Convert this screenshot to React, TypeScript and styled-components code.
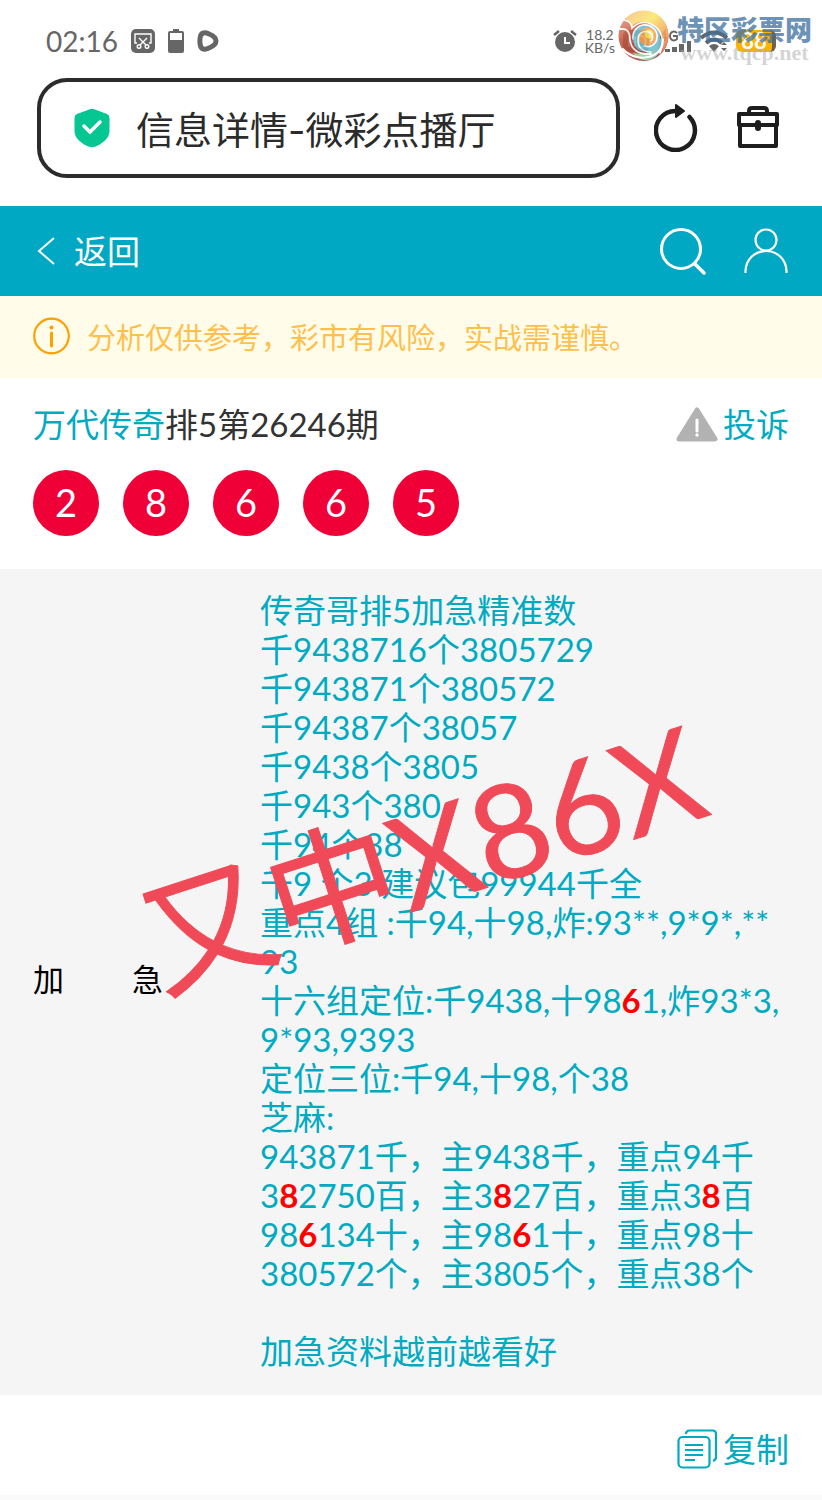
import React from 'react'
import styled, { createGlobalStyle } from 'styled-components'

const GlobalStyle = createGlobalStyle`
  * {
    box-sizing: border-box;
  }
  body {
    margin: 0;
    background: #fafafa;
    font-family: Lato, "Noto Sans CJK SC", sans-serif;
  }
  svg {
    display: block;
    flex: none;
  }
  button {
    padding: 0;
    border: 0;
    background: none;
    color: inherit;
    font: inherit;
  }
`

const Page = styled.div`
  position: relative;
  overflow: hidden;
  background: #fff;
`

const StatusBar = styled.div`
  display: flex;
  align-items: center;
  justify-content: space-between;
  height: 78px;
  padding: 4px 46px 0;
  color: #666;
`

const StatusGroup = styled.div<{ $gap: number }>`
  display: flex;
  align-items: center;
  gap: ${props => props.$gap}px;
`

const Clock = styled.span`
  font-size: 28px;
  line-height: 32px;
`

const Speed = styled.span`
  font-size: 14px;
  line-height: 13px;
  text-align: center;
`

const BatteryLevel = styled.span`
  width: 40px;
  height: 22px;
  border-right: 4px solid #6b6450;
  border-radius: 6px;
  background: #fdb200;
  color: #fff;
  font: 700 22px/22px Lato, sans-serif;
  text-align: center;
`

const Watermark = styled.div`
  position: absolute;
  top: 10px;
  right: 10px;
  display: flex;
  align-items: center;
  gap: 8px;
`

const WatermarkName = styled.div`
  margin-top: 4px;
  color: rgba(60, 112, 158, 0.75);
  font: 900 27px/30px "Noto Sans CJK SC", sans-serif;
`

const WatermarkSite = styled.div`
  color: rgba(170, 170, 170, 0.5);
  font: 700 22px/18px "Liberation Serif", serif;
  text-align: center;
`

const BrowserBar = styled.div`
  display: flex;
  align-items: center;
  gap: 34px;
  padding: 0 42px 28px 37px;
  color: #1e1e1e;
`

const AddressBox = styled.label`
  display: flex;
  flex: 1;
  align-items: center;
  gap: 26px;
  min-width: 0;
  height: 100px;
  padding: 0 33px;
  border: 4px solid #2b2b2b;
  border-radius: 30px;
`

const AddressInput = styled.input`
  flex: 1;
  min-width: 0;
  padding: 4px 0 0;
  border: 0;
  outline: 0;
  background: none;
  color: #2b2b2b;
  font: 38px/50px Inter, "Noto Sans CJK SC", sans-serif;
`

const BrowserTools = styled.div`
  display: flex;
  gap: 38px;
`

const Header = styled.header`
  display: flex;
  align-items: center;
  justify-content: space-between;
  height: 90px;
  padding: 0 34px 0 32px;
  background: #00a8c4;
  color: #fff;
`

const BackLink = styled.a`
  display: flex;
  align-items: center;
  gap: 17px;
  color: inherit;
  font-size: 33px;
  line-height: 48px;
  text-decoration: none;
`

const HeaderTools = styled.div`
  display: flex;
  gap: 37px;
`

const Notice = styled.p`
  display: flex;
  align-items: center;
  gap: 17px;
  height: 82px;
  margin: 0;
  padding: 0 33px 2px;
  background: #fffde9;
  color: #ffbf4d;
  font-size: 29px;
`

const Issue = styled.section`
  height: 191px;
  padding: 22px 33px 0;
`

const IssueHead = styled.div`
  display: flex;
  align-items: center;
  justify-content: space-between;
`

const IssueTitle = styled.h1`
  margin: 0;
  color: #333;
  font-size: 33px;
  font-weight: 400;
  line-height: 48px;

  a {
    color: #00abc2;
    text-decoration: none;
  }
`

const ActionButton = styled.button`
  display: flex;
  align-items: center;
  gap: 5px;
  color: #00abc2;
  font-size: 33px;
  line-height: 48px;
`

const Balls = styled.div`
  display: flex;
  gap: 24px;
  margin-top: 22px;
`

const Ball = styled.span`
  width: 66px;
  height: 66px;
  border-radius: 50%;
  background: #ef0036;
  color: #fff;
  font-size: 38px;
  line-height: 64px;
  text-align: center;
`

const Plan = styled.section`
  position: relative;
  display: grid;
  grid-template-columns: 130px 1fr;
  align-items: center;
  column-gap: 97px;
  padding: 22px 0 24px 33px;
  background: #f5f5f5;
`

const PlanName = styled.h2`
  display: flex;
  justify-content: space-between;
  margin: 0;
  padding-bottom: 8px;
  color: #000;
  font-size: 31px;
  font-weight: 400;
`

const PlanBody = styled.div`
  color: #00abc2;
  font-size: 33px;
  line-height: 39px;
  white-space: nowrap;
`

const PlanLine = styled.div`
  height: 39px;
`

const Hit = styled.b`
  color: #f00;
`

const Stamp = styled.div`
  position: absolute;
  top: 192px;
  left: 132px;
  color: #f04a58;
  font-size: 130px;
  line-height: 190px;
  white-space: nowrap;
  transform: rotate(-18deg);
  -webkit-text-stroke: 1px #f04a58;
`

const Footer = styled.footer`
  display: flex;
  align-items: flex-start;
  justify-content: flex-end;
  height: 100px;
  padding: 30px 33px 0;
`

const result = [2, 8, 6, 6, 5]

// digits wrapped in [] are the ones that hit
const lines = [
  '传奇哥排5加急精准数',
  '千9438716个3805729',
  '千943871个380572',
  '千94387个38057',
  '千9438个3805',
  '千943个380',
  '千94个38',
  '千9 个3 建议包99944千全',
  '重点4组 :千94,十98,炸:93**,9*9*,**',
  '93',
  '十六组定位:千9438,十98[6]1,炸93*3,',
  '9*93,9393',
  '定位三位:千94,十98,个38',
  '芝麻:',
  '943871千，主9438千，重点94千',
  '3[8]2750百，主3[8]27百，重点3[8]百',
  '98[6]134十，主98[6]1十，重点98十',
  '380572个，主3805个，重点38个',
  '',
  '加急资料越前越看好'
]

const renderLine = (line: string) =>
  line
    .split(/[[\]]/)
    .map((part, index) => (index % 2 ? <Hit key={index}>{part}</Hit> : part))

const ScreenshotIcon = () => (
  <svg width="24" height="24" viewBox="0 0 24 24" fill="none">
    <rect width="24" height="24" rx="5" fill="#666" />
    <g stroke="#fff" strokeWidth="1.4">
      <path d="M6 14H4V5h16v9h-2M8 9l7 7M16 9l-7 7" />
      <circle cx="8" cy="17.500" r="1.800" />
      <circle cx="16" cy="17.500" r="1.800" />
    </g>
  </svg>
)

const BatteryIcon = () => (
  <svg width="16" height="24" viewBox="0 0 16 24">
    <path d="M5 0h6v2h3a2 2 0 0 1 2 2v18a2 2 0 0 1-2 2H2a2 2 0 0 1-2-2V4a2 2 0 0 1 2-2h3z" fill="#666" />
    <path d="M2 4h12v7H2z" fill="#fff" />
  </svg>
)

const PlayIcon = () => (
  <svg width="22" height="22" viewBox="0 0 22 22">
    <path
      d="M3.500 6C4.500 2.500 8 2 12 4c5 2 7 4 7 7s-2 5-7 7c-4 2-7.500 1.500-8.500-2-1-4-1-6 0-10z"
      fill="none"
      stroke="#666"
      strokeWidth="5"
      strokeLinejoin="round"
    />
  </svg>
)

const AlarmIcon = () => (
  <svg width="24" height="24" viewBox="0 0 24 24" fill="none">
    <circle cx="12" cy="13" r="10" fill="#666" />
    <path d="M1 6l5-4M23 6l-5-4" stroke="#666" strokeWidth="2.500" />
    <path d="M12 8v6h5" stroke="#fff" strokeWidth="2" />
  </svg>
)

const HdIcon = () => (
  <svg width="26" height="22" viewBox="0 0 26 22" fill="none">
    <rect width="26" height="22" rx="5" fill="#666" />
    <path d="M6 6v11M12 6v11M6 11.500h6M16 6v11h2c6 0 6-11 0-11z" stroke="#fff" strokeWidth="2" />
  </svg>
)

const SignalIcon = () => (
  <svg width="35" height="24" viewBox="0 0 35 24">
    <g fill="none" stroke="#666" strokeWidth="1.800">
      <path d="M8 12V2L3 9h7M20 4c-3-3-7-1-7 3s4 6 7 3V7h-4" />
    </g>
    <path d="M8 20h5v3H8zM15 18h5v5h-5zM22 15h5v8h-5zM30 12h4v11h-4z" fill="#666" />
  </svg>
)

const WifiIcon = () => (
  <svg width="28" height="22" viewBox="0 0 28 22" fill="none">
    <path d="M1 8q13-11 26 0M6 13q8-7 16 0" stroke="#666" strokeWidth="4" />
    <path d="M9 16q5-4 10 0l-5 6z" fill="#666" />
    <path d="M21 15l3-3 3 3zM21 18l3 3 3-3z" fill="#666" />
  </svg>
)

const SwirlLogo = () => (
  <svg width="51" height="52" viewBox="0 0 51 52" opacity="0.880">
    <defs>
      <linearGradient id="warm" x1="0" y1="0" x2="0.600" y2="1">
        <stop offset="0" stopColor="#f2b196" />
        <stop offset="0.450" stopColor="#c2563f" />
        <stop offset="1" stopColor="#a03c38" />
      </linearGradient>
      <linearGradient id="gold" x1="0" y1="0" x2="1" y2="1">
        <stop offset="0" stopColor="#f9c08a" />
        <stop offset="0.400" stopColor="#fbe66c" />
        <stop offset="0.750" stopColor="#f2a057" />
        <stop offset="1" stopColor="#d9503f" />
      </linearGradient>
      <linearGradient id="cool" x1="0" y1="1" x2="1" y2="0">
        <stop offset="0" stopColor="#a5d25c" />
        <stop offset="0.400" stopColor="#8ccbb0" />
        <stop offset="1" stopColor="#4ba3c8" />
      </linearGradient>
    </defs>
    <circle cx="25.500" cy="26" r="25" fill="url(#warm)" />
    <path d="M7 9C18-3 37-2 46 11c7 11 5 24-2 32 2-13 0-24-11-29-8-4-15-2-20 3C12 13 10 10 7 9z" fill="url(#gold)" />
    <path d="M15 43c13 3 24-3 28-16 3 9-1 18-9 22-8 3-15 0-19-6z" fill="url(#cool)" />
    <path d="M15 27c0-9 8-15 17-12 9 2 13 12 8 20-4 6-11 8-17 6-5-2-8-7-8-14z" fill="#6dbdd0" />
    <path d="M21 27c0-7 6-11 12-9s8 9 4 14c-4 4-9 4-12 2-3-1-4-4-4-7z" fill="#f4a14e" />
    <circle cx="31" cy="24" r="4.500" fill="#fce45c" />
    <g fill="none" stroke="#fff" strokeLinecap="round">
      <path d="M2 19c8-1 10 4 10 11 1 9 8 15 21 14" strokeWidth="1.800" />
      <path d="M6 10c5 1 8 4 8 8 5-5 12-7 19-4 11 5 14 17 9 29" strokeWidth="1.600" />
      <path d="M5 39c8 9 21 11 31 6 6-3 9-8 9-16" strokeWidth="2" />
      <path d="M15 29c-1-7 4-13 10-14 8-1 15 5 14 13-1 7-7 10-12 8" strokeWidth="1.600" />
      <path d="M33 42c-9 0-14-6-13-13 0-5 5-9 10-7 5 1 6 6 3 9" strokeWidth="1.400" />
    </g>
  </svg>
)

const ShieldIcon = () => (
  <svg width="36" height="40" viewBox="0 0 36 40" fill="none">
    <path
      d="M15 1.500q3-1.500 6 0l12 4.500q2.500 1 2.500 4v13c0 8-8 13-14 15.500q-3.500 1.500-7 0C8.500 36 .500 31 .500 23V10q0-3 2.500-4z"
      fill="#06c792"
    />
    <path d="M10 18l6 6 10-10" stroke="#fff" strokeWidth="3.500" strokeLinecap="round" />
  </svg>
)

const ReloadIcon = () => (
  <svg width="44" height="48" viewBox="0 0 44 48" fill="none">
    <path d="M35.500 13A19.500 19.500 0 1 1 22 7" stroke="currentColor" strokeWidth="4.500" strokeLinecap="round" />
    <path d="M22 1l8 6-8 6z" fill="currentColor" stroke="currentColor" strokeWidth="2" strokeLinejoin="round" />
  </svg>
)

const ToolboxIcon = () => (
  <svg width="44" height="48" viewBox="0 0 44 48" fill="none" stroke="currentColor" strokeWidth="4" strokeLinejoin="round">
    <path d="M3 10h38v11H3zM4 21v21h36V21M13 10V7q0-3 3-3h12q3 0 3 3v3" />
    <path d="M22 19v5" strokeWidth="6" strokeLinecap="round" />
  </svg>
)

const BackIcon = () => (
  <svg width="25" height="30" viewBox="0 0 25 30" fill="none" stroke="#fff" strokeWidth="2">
    <path d="M22 2L7 15l15 13" />
  </svg>
)

const SearchIcon = () => (
  <svg width="48" height="48" viewBox="0 0 48 48" fill="none" stroke="#fff" strokeWidth="3" strokeLinecap="round">
    <circle cx="22" cy="22" r="19.500" />
    <path d="M36 37l9 9" strokeWidth="3.500" />
  </svg>
)

const UserIcon = () => (
  <svg width="44" height="48" viewBox="0 0 44 48" fill="none" stroke="#fff" strokeWidth="2.200">
    <circle cx="22" cy="13" r="10.500" />
    <path d="M1.500 46V44C2 32 11 24 22 24s20 8 20.500 20v2" />
  </svg>
)

const InfoIcon = () => (
  <svg width="37" height="38" viewBox="0 0 37 38" fill="none" stroke="#ff9f00">
    <circle cx="18.500" cy="19" r="17.300" strokeWidth="2.200" />
    <path d="M18.500 16v13" strokeWidth="3" strokeLinecap="round" />
    <circle cx="18.500" cy="10.500" r="2" fill="#ff9f00" stroke="none" />
  </svg>
)

const WarnIcon = () => (
  <svg width="42" height="35" viewBox="0 0 42 35" fill="none">
    <path d="M21 3L39 32H3z" fill="#b2b2b2" stroke="#b2b2b2" strokeWidth="5" strokeLinejoin="round" />
    <path d="M21 13v11" stroke="#fff" strokeWidth="3" strokeLinecap="round" />
    <circle cx="21" cy="28" r="1.700" fill="#fff" />
  </svg>
)

const CopyIcon = () => (
  <svg width="41" height="40" viewBox="0 0 41 40" fill="none" stroke="#00abc2" strokeWidth="2.200">
    <rect x="1.500" y="8" width="31" height="30.500" rx="4" />
    <path d="M9 5q0-3.500 3.500-3.500h23q3.500 0 3.500 3.500v23q0 3-3 4M8 16h18M8 21h18M8 26h18M8 31h10" />
  </svg>
)

const App: React.FC = () => {
  return (
    <Page>
      <GlobalStyle />
      <StatusBar>
        <StatusGroup $gap={13}>
          <Clock>02:16</Clock>
          <ScreenshotIcon />
          <BatteryIcon />
          <PlayIcon />
        </StatusGroup>
        <StatusGroup $gap={8}>
          <AlarmIcon />
          <Speed>
            18.2
            <br />
            KB/s
          </Speed>
          <HdIcon />
          <SignalIcon />
          <WifiIcon />
          <BatteryLevel>88</BatteryLevel>
        </StatusGroup>
      </StatusBar>
      <Watermark>
        <SwirlLogo />
        <div>
          <WatermarkName>特区彩票网</WatermarkName>
          <WatermarkSite>www.tqcp.net</WatermarkSite>
        </div>
      </Watermark>

      <BrowserBar>
        <AddressBox>
          <ShieldIcon />
          <AddressInput
            type="text"
            aria-label="地址栏"
            defaultValue="信息详情-微彩点播厅"
          />
        </AddressBox>
        <BrowserTools>
          <button type="button" aria-label="刷新">
            <ReloadIcon />
          </button>
          <button type="button" aria-label="工具箱">
            <ToolboxIcon />
          </button>
        </BrowserTools>
      </BrowserBar>

      <Header>
        <BackLink href="#">
          <BackIcon />
          返回
        </BackLink>
        <HeaderTools>
          <button type="button" aria-label="搜索">
            <SearchIcon />
          </button>
          <button type="button" aria-label="我的">
            <UserIcon />
          </button>
        </HeaderTools>
      </Header>

      <Notice>
        <InfoIcon />
        分析仅供参考，彩市有风险，实战需谨慎。
      </Notice>

      <Issue>
        <IssueHead>
          <IssueTitle>
            <a href="#">万代传奇</a>排5第26246期
          </IssueTitle>
          <ActionButton type="button">
            <WarnIcon />
            投诉
          </ActionButton>
        </IssueHead>
        <Balls>
          {result.map((num, index) => (
            <Ball key={index}>{num}</Ball>
          ))}
        </Balls>
      </Issue>

      <Plan>
        <PlanName>
          <span>加</span>
          <span>急</span>
        </PlanName>
        <PlanBody>
          {lines.map((line, index) => (
            <PlanLine key={index}>{renderLine(line)}</PlanLine>
          ))}
        </PlanBody>
        <Stamp>又中X86X</Stamp>
      </Plan>

      <Footer>
        <ActionButton type="button">
          <CopyIcon />
          复制
        </ActionButton>
      </Footer>
    </Page>
  )
}

export default App
